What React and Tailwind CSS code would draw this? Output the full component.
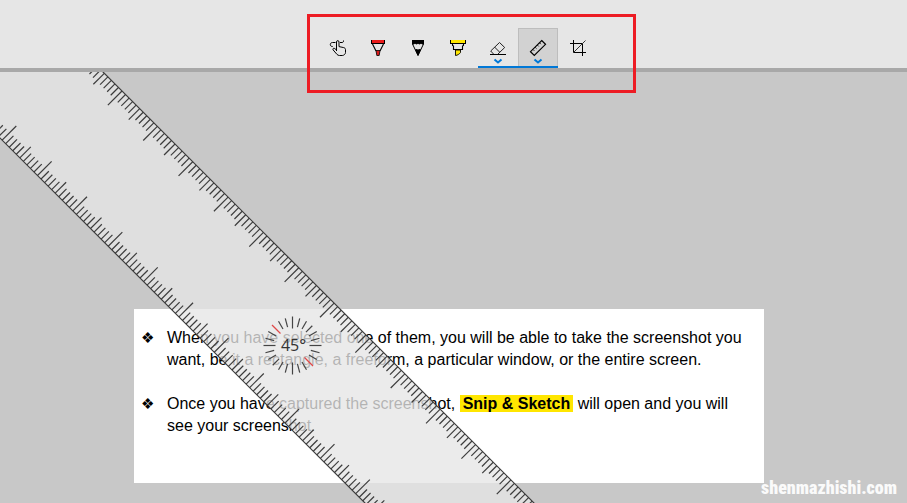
const MAJOR = 10;
const TICK_GAP = 5;
const RULER_WIDTH = 119.5;

const ticks = Array.from({ length: 181 }, (_, i) => i - 60);
const dialTicks = Array.from({ length: 24 }, (_, i) => i * 15);

function tickLength(i) {
  if (i % MAJOR === 0) return 20;
  if (i % 5 === 0) return 15.5;
  return 11;
}

function TouchIcon() {
  return (
    <svg viewBox="0 0 40 40" className="size-10" fill="none" stroke="black" strokeWidth="1">
      <path d="M17.500 14.500h-3c-1.400 0-2.200 1-2.200 2.100 0 1.200.9 2 2.400 1.900M22 14.500h2c1.200 0 1.700-.8 1.500-2" />
      <path d="M18.500 23v-9c0-1.900 2.500-1.900 2.500 0v4.600l4.700 1c1.200.3 1.800 1 1.800 2v2.900c0 1.600-1.700 3-3.200 3h-2.800c-1 0-1.900-.4-2.600-1.200l-3.700-4.300c-.9-1.100.3-2.300 1.500-1.500l1.800 1.500" />
    </svg>
  );
}

function PenIcon() {
  return (
    <svg viewBox="0 0 40 40" className="size-10">
      <path d="M13 12h14v4H13z" />
      <path d="M14 12h12v3H14z" fill="#e81b1b" />
      <path d="M14.500 16l3.500 7M25.500 16l-3.500 7" fill="none" stroke="black" strokeWidth="1.100" />
      <path d="M18 22.500h4l-.8 5h-2.400z" fill="#d81b1b" stroke="black" strokeWidth=".8" />
    </svg>
  );
}

function PencilIcon() {
  return (
    <svg viewBox="0 0 40 40" className="size-10">
      <path d="M14 12h12v4l-1 .7-2-.9-1.500.8-1.500-.8-1.500.8-1.500-.8-2 .9-1-.7z" />
      <path d="M14.500 16l5.500 11.500L25.500 16" fill="none" stroke="black" />
      <path d="M17 21.500l1.500-.5 1.500.5 1.500-.5 1.500.5L20 28z" />
    </svg>
  );
}

function HighlighterIcon() {
  return (
    <svg viewBox="0 0 40 40" className="size-10">
      <path d="M12 12h16v4H12z" />
      <path d="M13 12h14v3H13z" fill="#ffe600" />
      <path d="M14.500 16v1.500l1 .5v3.500h9V18l1-.5V16" fill="none" stroke="black" strokeWidth="1.100" />
      <path d="M17.500 22h5v2.500c-1 1.500-3 2.800-5 3z" fill="#ffe600" stroke="black" strokeWidth=".9" />
    </svg>
  );
}

function EraserIcon() {
  return (
    <svg viewBox="0 0 40 40" className="size-10" fill="none" stroke="black" strokeWidth="1">
      <path d="M21.500 14.500l5.200 5-7.200 7H16L12.700 23zM16.500 19l5 5" stroke="#222" />
      <path d="M12 26.500h16" />
      <path d="M16.500 31.500l3.500 3 3.500-3" stroke="#0078d7" strokeWidth="2" />
    </svg>
  );
}

function RulerIcon() {
  return (
    <svg viewBox="0 0 40 40" className="size-10" fill="none" stroke="black">
      <path d="M23.700 12.500l3.800 3.800L16.300 27.500l-3.800-3.800z" strokeWidth="1.200" />
      <path
        d="M15 21.500l1.300 1.300M17.200 19.300l1.300 1.300M19.400 17.100l1.300 1.300M21.600 14.900l1.300 1.300"
        strokeWidth=".9"
      />
      <path d="M16.500 31.500l3.500 3 3.500-3" stroke="#0078d7" strokeWidth="2" />
    </svg>
  );
}

function CropIcon() {
  return (
    <svg viewBox="0 0 40 40" className="size-10" fill="none" stroke="black" strokeWidth="1">
      <path d="M15.500 12v12.500H28M12 15.500h12.500V28" />
      <path d="M16 24L27.500 12.500" stroke="#333" />
    </svg>
  );
}

const tools = [
  { label: 'Touch writing', icon: <TouchIcon /> },
  { label: 'Ballpoint pen', icon: <PenIcon /> },
  { label: 'Pencil', icon: <PencilIcon /> },
  { label: 'Highlighter', icon: <HighlighterIcon /> },
  { label: 'Eraser', icon: <EraserIcon />, underline: true },
  { label: 'Ruler', icon: <RulerIcon />, underline: true, active: true },
  { label: 'Image crop', icon: <CropIcon /> },
];

function Toolbar() {
  return (
    <header className="flex justify-center border-b-4 border-[#a8a8a8] bg-[#e6e6e6] pt-7 pl-[9px]">
      <div className="relative flex">
        {tools.map((tool) => (
          <button
            key={tool.label}
            type="button"
            aria-label={tool.label}
            aria-pressed={!!tool.active}
            className={`relative size-10 ${tool.active ? 'bg-[#d2d2d2] inset-ring inset-ring-[#bdbdbd]' : ''}`}
          >
            {tool.icon}
            {tool.underline && <span className="absolute inset-x-0 bottom-0 h-0.5 bg-[#0078d7]" />}
          </button>
        ))}
        <div className="pointer-events-none absolute -top-[14px] -right-[38px] -left-[11px] z-20 h-[79px] border-3 border-[#ed1c24]" />
      </div>
    </header>
  );
}

// on-canvas ruler, turned 45 degrees
function Ruler() {
  return (
    <svg className="pointer-events-none absolute inset-0 size-full">
      <g transform="translate(122 19) rotate(45)" stroke="#3c3c3c" strokeWidth="1.2">
        <rect x="-300" y="0" width="1300" height={RULER_WIDTH} fill="#e6e6e6" fillOpacity=".78" />
        {ticks.map((i) => (
          <g key={i}>
            <line x1={i * TICK_GAP} x2={i * TICK_GAP} y1="0" y2={tickLength(i)} />
            <line
              x1={i * TICK_GAP}
              x2={i * TICK_GAP}
              y1={RULER_WIDTH}
              y2={RULER_WIDTH - tickLength(i)}
            />
          </g>
        ))}
      </g>
      <g transform="translate(292.5 273.500)">
        {dialTicks.map((deg) => {
          const red = deg === 135 || deg === 315;
          const long = red || deg % 90 === 0;
          return (
            <line
              key={deg}
              y1={long ? -29 : -28}
              y2={long ? -17 : -19}
              stroke={red ? '#e04848' : '#444'}
              strokeWidth="1.200"
              transform={`rotate(${deg})`}
            />
          );
        })}
        <text x="1" y="5.500" textAnchor="middle" className="fill-[#333] font-['Open_Sans',sans-serif] text-base">
          45°
        </text>
      </g>
    </svg>
  );
}

function Bullet() {
  return <span className="w-[26px] shrink-0 font-['DejaVu_Sans',sans-serif] text-[15px] leading-[22px]">❖</span>;
}

export default function App() {
  return (
    <div className="flex min-h-screen flex-col bg-[#c8c8c8] font-['Liberation_Sans',Arial,sans-serif] text-black">
      <Toolbar />
      <main className="relative flex flex-1 items-end justify-center overflow-hidden pr-[9px] pb-5">
        <article className="w-full max-w-[630px] bg-white pt-[18px] pr-3 pb-[46px] pl-[7px]">
          <ul className="flex flex-col gap-[22px] text-base leading-[22px]">
            <li className="flex">
              <Bullet />
              <p>
                When you have selected one of them, you will be able to take the screenshot you want, be it a
                rectangle, a freeform, a particular window, or the entire screen.
              </p>
            </li>
            <li className="flex">
              <Bullet />
              <p>
                Once you have captured the screenshot,{' '}
                <mark className="bg-[#ffe600] px-[3px] font-bold text-black">Snip &amp; Sketch</mark> will open and
                you will see your screenshot.
              </p>
            </li>
          </ul>
        </article>
        <Ruler />
        <span className="absolute right-[10px] bottom-[3px] font-['Roboto_Condensed','Roboto',sans-serif] text-lg leading-6 font-black text-[#fafafa]">
          shenmazhishi.com
        </span>
      </main>
    </div>
  );
}
